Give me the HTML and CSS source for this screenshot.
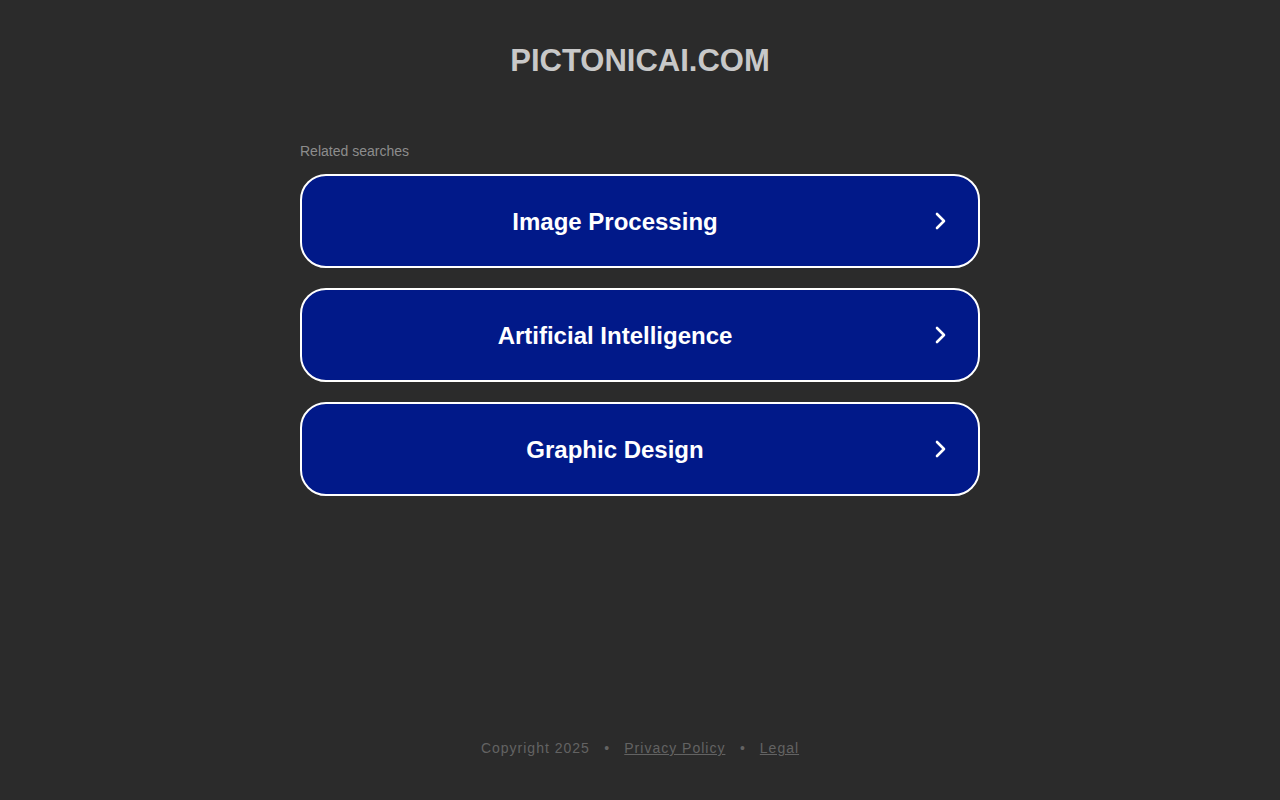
FILE: index.html
```html
<!DOCTYPE html>
<html>
<head>
<meta charset="utf-8">
<link rel="stylesheet" href="styles.css">
</head>
<body>
<div class="page">
  <header class="header"><h1 class="domain">PICTONICAI.COM</h1></header>
  <main class="main">
    <div class="related">Related searches</div>
    <div class="list">
      <a class="item" href="#"><span class="label">Image Processing</span><svg class="chev" viewBox="0 0 24 24" width="24" height="24"><path d="M9 5l7 7-7 7" fill="none" stroke="#fff" stroke-width="2.6" stroke-linecap="round" stroke-linejoin="round"/></svg></a>
      <a class="item" href="#"><span class="label">Artificial Intelligence</span><svg class="chev" viewBox="0 0 24 24" width="24" height="24"><path d="M9 5l7 7-7 7" fill="none" stroke="#fff" stroke-width="2.6" stroke-linecap="round" stroke-linejoin="round"/></svg></a>
      <a class="item" href="#"><span class="label">Graphic Design</span><svg class="chev" viewBox="0 0 24 24" width="24" height="24"><path d="M9 5l7 7-7 7" fill="none" stroke="#fff" stroke-width="2.6" stroke-linecap="round" stroke-linejoin="round"/></svg></a>
    </div>
  </main>
  <footer class="footer">
    <span>Copyright 2025</span><span class="dot">•</span><a href="#">Privacy Policy</a><span class="dot">•</span><a href="#">Legal</a>
  </footer>
</div>
</body>
</html>
```
FILE: styles.css
```css
html, body { margin: 0; padding: 0; }
body {
  background: #2b2b2b;
  font-family: "Liberation Sans", Arial, sans-serif;
  width: 1280px;
  height: 800px;
  overflow: hidden;
}
.page {
  height: 800px;
  display: flex;
  flex-direction: column;
  align-items: center;
}
.header { padding-top: 42px; height: 99px; box-sizing: border-box; }
.domain {
  margin: 0;
  font-size: 31px;
  line-height: 38px;
  font-weight: 700;
  color: #c8c8c8;
  letter-spacing: 0;
}
.main { width: 680px; }
.related {
  font-size: 14px;
  line-height: 18px;
  color: #8d8d8d;
  margin-top: 43px;
  margin-bottom: 14px;
}
.list { display: flex; flex-direction: column; gap: 20px; }
.item {
  display: flex;
  align-items: center;
  height: 94px;
  box-sizing: border-box;
  border: 2px solid #fff;
  border-radius: 26px;
  background: #011989;
  text-decoration: none;
  padding: 2px 26px 0 0;
}
.label {
  flex: 1;
  text-align: center;
  color: #fff;
  font-size: 24px;
  font-weight: 700;
}
.chev { flex: none; margin-top: -2px; }
.footer {
  margin-top: auto;
  margin-bottom: 44px;
  font-family: "Liberation Sans", Arial, sans-serif;
  font-size: 14px;
  letter-spacing: 1px;
  color: #636363;
  display: flex;
}
.footer a { color: #636363; text-decoration: underline; }
.dot { margin: 0 14px 0 14.5px; }
```
